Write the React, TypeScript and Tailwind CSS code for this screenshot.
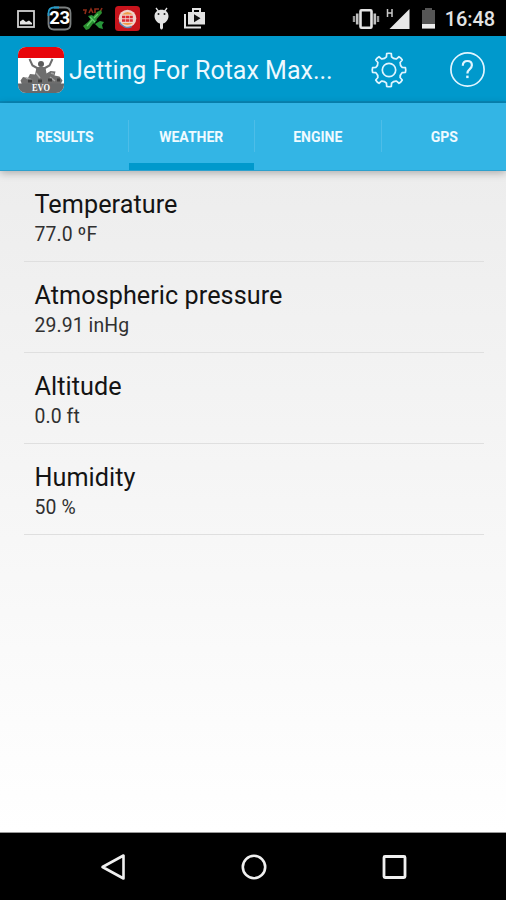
const tabs = ["RESULTS", "WEATHER", "ENGINE", "GPS"];

const rows = [
  { label: "Temperature", value: "77.0 ºF" },
  { label: "Atmospheric pressure", value: "29.91 inHg" },
  { label: "Altitude", value: "0.0 ft" },
  { label: "Humidity", value: "50 %" },
];

// Eight teeth, each one going root -> tip -> tip -> root
const gearPath = (() => {
  const pt = (r: number, deg: number) => {
    const a = ((deg - 90) * Math.PI) / 180;
    return `${(18 + r * Math.cos(a)).toFixed(2)} ${(18 + r * Math.sin(a)).toFixed(2)}`;
  };
  let d = "";
  for (let i = 0; i < 8; i++) {
    const c = i * 45;
    d += `${i === 0 ? "M" : "L"}${pt(13.4, c - 11)}L${pt(16.6, c - 8)}Q${pt(17.1, c)} ${pt(16.6, c + 8)}L${pt(13.4, c + 11)}Q${pt(11.8, c + 22.5)} ${pt(13.4, c + 34)}`;
  }
  return d + "Z";
})();

function StatusBar() {
  return (
    <div className="flex h-9 shrink-0 items-center bg-black pl-[17px] pr-[11px] pt-px">
      {/* Notifications */}
      <svg width="18" height="18" viewBox="0 0 18 18">
        <rect x="1" y="1" width="16" height="16" fill="none" stroke="#d0d0d0" strokeWidth="1.8" />
        <path d="M3 14.500v-3l3-2 3 2.500 3-1.500 3 2.500v1.500z" fill="#e4e4e4" />
      </svg>
      <div className="relative ml-[12px] flex h-[25px] w-[25px] items-center justify-center">
        <svg className="absolute inset-0" width="25" height="25" viewBox="0 0 25 25" fill="none" strokeWidth="1.8">
          <path d="M7 1.500h11q5.500 0 5.500 5.500v11q0 5.500-5.500 5.500H7q-5.500 0-5.500-5.500V7" stroke="#7c8080" />
          <path d="M1.500 10V7q0-5.500 5.500-5.500h5" stroke="#239bc9" />
        </svg>
        <span className="relative text-[18.500px] font-bold leading-none tracking-[-0.3px] text-white">23</span>
      </div>
      <svg className="ml-[10px]" width="24" height="24" viewBox="0 0 24 24">
        <path d="M1 3h3l-1 4M7 6l2-4 2 4M13 6V2h4M20 1l-2 4" stroke="#8e2b18" strokeWidth="1.600" fill="none" />
        <path d="m1 19 5-4 9-10 4-2 1 3-7 8-6 8-3 1z" fill="#2c8f30" />
        <path d="m6 9 4-1 5 5-3 4zM13 17l5-3 4 1-2 3 1 4-4-1z" fill="#27963a" />
        <path d="m5 19 5-6M12 11l4-4M8 10l5 5" stroke="#65cc69" strokeWidth="1.200" />
      </svg>
      <svg className="ml-[9px]" width="25" height="25" viewBox="0 0 25 25">
        <rect width="25" height="25" rx="3.500" fill="#c8141c" />
        <circle cx="12.500" cy="12.500" r="8.800" fill="#efd2cb" />
        <path d="M4.500 16a8.800 8.800 0 0 0 12 4.500" fill="none" stroke="#5787b8" strokeWidth="1.500" />
        <path d="M7 8.500q5.500-5 11 0z" fill="#f09a48" />
        <path d="M7 17q5.500 4 11 0z" fill="#f09a48" />
        <path d="M7 11h11M7 14.500h11" stroke="#dc2830" strokeWidth="2.500" strokeDasharray="3.200 .6" />
      </svg>
      <svg className="ml-[13px]" width="17" height="25" viewBox="0 0 17 25">
        <path d="m3 2 3 4M14 2l-3 4" stroke="#e3e3e3" strokeWidth="1.300" />
        <path d="M1.500 10C1.500 1.500 15.500 1.500 15.500 10c0 4-3 7-5.500 7.500V22q-1.500 3-3 0v-4.500c-2.500-.5-5.500-3.500-5.500-7.500z" fill="#e3e3e3" />
        <circle cx="5.500" cy="8" r="1" fill="#222" />
        <circle cx="11.500" cy="8" r="1" fill="#222" />
      </svg>
      <svg className="ml-[14px]" width="22" height="21" viewBox="0 0 22 21">
        <path d="M1 6v13.500h16" fill="none" stroke="#e3e3e3" strokeWidth="2" />
        <path d="M9 4V1h7v3" fill="none" stroke="#e3e3e3" strokeWidth="2" />
        <path d="M4 4h17v12.500H4z" fill="#e3e3e3" />
        <path d="m10 6.200 6.500 4-6.500 4z" fill="#111" />
      </svg>

      {/* Vibrate, signal, battery */}
      <svg className="ml-auto" width="28" height="22" viewBox="0 0 28 22">
        <rect x="8.500" y="2.300" width="11" height="17.400" rx="1" fill="none" stroke="#e3e3e3" strokeWidth="2.600" />
        <path d="M5.200 5.500v11M22.800 5.500v11" stroke="#c2c2c2" strokeWidth="2.600" />
        <path d="M2 8v6M26 8v6" stroke="#999" strokeWidth="2.400" />
      </svg>
      <svg className="ml-[6px]" width="24" height="22" viewBox="0 0 24 22">
        <path d="M1.500 1v8M6 1v8M1.500 5H6" stroke="#c9c9c9" strokeWidth="1.500" />
        <path d="M23.500 1v20H3.500z" fill="#e8e8e8" />
      </svg>
      <svg className="ml-[11px]" width="15" height="21" viewBox="0 0 15 21">
        <path d="M1 2h3V0h7v2h3v18.500H1z" fill="#565656" />
        <path d="M1 16h13v4.500H1z" fill="#ededed" />
      </svg>
      <span className="ml-[9px] pt-px text-[20px] font-medium leading-none tracking-[-0.1px] text-[#e3e3e3]">16:48</span>
    </div>
  );
}

function AppIcon() {
  return (
    <svg width="46" height="46" viewBox="0 0 46 46">
      <clipPath id="tile">
        <rect width="46" height="46" rx="8" />
      </clipPath>
      <g clipPath="url(#tile)">
        <rect width="46" height="46" fill="#fff" />
        <rect width="46" height="11" fill="#e8060b" />
        {/* Driver with both arms up, kart below */}
        <path d="m11.500 12 3 6.500 5.500 3M34.500 12l-3 6.500-5.500 3" stroke="#6d6d6d" strokeWidth="2" fill="none" />
        <circle cx="23" cy="17" r="3" fill="#5b5b5b" />
        <path d="m18.500 20.500 4.500-1 4.500 1 1 6 4-2.500 5 .5-1 4 5 1 3 4-2 4H4l-1.500-4 2.500-3.500 5 1 2-4 5 .5z" fill="#6e6e6e" />
        <path d="m8 31 6 2M18 26l4 5M32 30l5 4M33 26l3 1" stroke="#a5a5a5" strokeWidth="1.600" />
        <path d="M10 34h4M20 34h4M30 33h4M39 33h3" stroke="#3e3e3e" strokeWidth="3" />
        <rect y="36.500" width="46" height="10" fill="#67696a" />
      </g>
      <text x="23" y="43.800" textAnchor="middle" fontFamily="Liberation Serif, serif" fontWeight="700" fontSize="10" textLength="18" lengthAdjust="spacingAndGlyphs" fill="#fff">EVO</text>
    </svg>
  );
}

function AppBar() {
  return (
    <div className="flex h-[67px] shrink-0 items-center border-b-2 border-[#0888b8] bg-[#0099cc] pl-[18px] pr-[21px] pt-[2px]">
      <AppIcon />
      <h1 className="ml-[5px] whitespace-nowrap pt-[2px] text-[25px] font-normal leading-none text-[#edf9ff]">Jetting For Rotax Max...</h1>
      <svg className="ml-auto" width="36" height="36" viewBox="0 0 36 36" fill="none" stroke="#e0f5ff" strokeWidth="1.700" strokeLinejoin="round">
        <path d={gearPath} />
        <circle cx="18" cy="18" r="6.700" />
      </svg>
      <svg className="ml-[43px]" width="35" height="35" viewBox="0 0 35 35" fill="none" stroke="#e0f5ff">
        <circle cx="17.500" cy="17.500" r="16.600" strokeWidth="1.700" />
        <path d="M12.800 13.800c0-3 1.900-4.800 4.600-4.800s4.500 1.700 4.500 4.200c0 2-1.100 3-2.400 4.200-1.400 1.200-2.100 2-2.100 4.100" strokeWidth="2.200" />
        <path d="M17.400 23.600v2.500" strokeWidth="2.400" />
      </svg>
    </div>
  );
}

function TabBar() {
  return (
    <div className="relative z-10 grid h-[68px] shrink-0 grid-cols-4 border-b border-[#2da0cd] bg-[#33b5e5] shadow-[0_2px_8px_rgba(0,0,0,0.28)]">
      {tabs.map((tab, i) => (
        <div key={tab} className="relative flex items-center justify-center pl-[3px] pt-px">
          {i > 0 && <span className="absolute left-[1px] top-[17px] h-[32px] w-px bg-[#4dbde8]" />}
          <span className="text-[14px] font-bold leading-none text-[#effaff]">{tab}</span>
          {tab === "WEATHER" && <span className="absolute bottom-0 left-[2px] right-[-1px] h-[7px] bg-[#0099cc]" />}
        </div>
      ))}
    </div>
  );
}

export default function App() {
  return (
    <div className="flex h-[900px] w-[506px] flex-col overflow-hidden bg-black font-['Roboto',sans-serif]">
      <StatusBar />
      <AppBar />
      <TabBar />

      <main className="flex-1 border-b border-[#999] bg-linear-to-b from-[#ededed] via-[#f6f6f6] to-white pl-6 pr-[22px]">
        {rows.map((row) => (
          <div key={row.label} className="h-[91px] border-b border-[#dfdfdf] pl-[10.500px] pt-[19px]">
            <div className="text-[25.200px] leading-[30px] tracking-[0.06px] text-[#141414]">{row.label}</div>
            <div className="mt-[3px] text-[19.400px] leading-[24px] tracking-[0.1px] text-[#303030]">{row.value}</div>
          </div>
        ))}
      </main>

      {/* Navigation keys */}
      <nav className="flex h-[67px] shrink-0 items-center justify-between pl-[98px] pr-[97px]">
        <svg width="30" height="30" viewBox="0 0 30 30" fill="none" stroke="#f0f0f0" strokeWidth="2.600" strokeLinejoin="round">
          <path d="M25.500 3.500v23L4.500 15z" />
        </svg>
        <svg width="30" height="30" viewBox="0 0 30 30" fill="none" stroke="#f0f0f0" strokeWidth="2.600">
          <circle cx="15" cy="15" r="11.200" />
        </svg>
        <svg width="30" height="30" viewBox="0 0 30 30" fill="none" stroke="#f0f0f0" strokeWidth="2.800">
          <rect x="5" y="4.500" width="21" height="21" rx="1" />
        </svg>
      </nav>
    </div>
  );
}
